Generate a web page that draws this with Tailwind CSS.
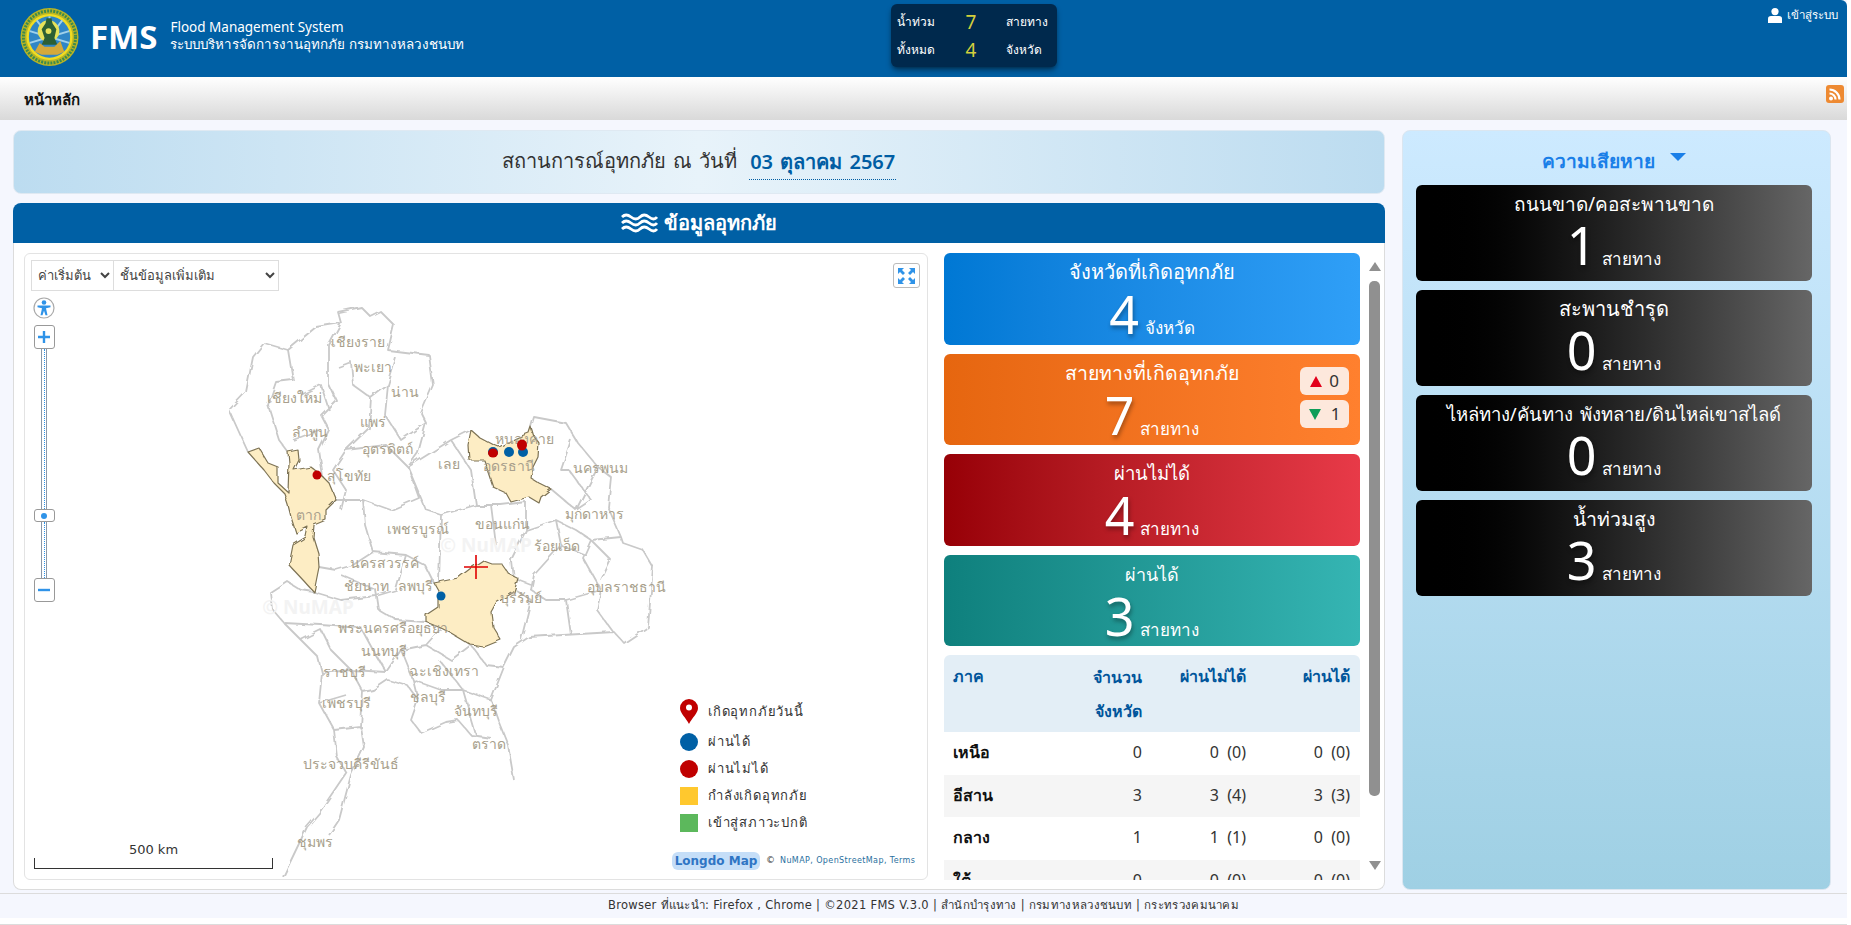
<!DOCTYPE html>
<html lang="th">
<head>
    <meta charset="UTF-8">
    <title>FMS Flood Management System</title>
    <script src="https://cdn.jsdelivr.net/npm/@tailwindcss/browser@4"></script>
</head>
<body class="bg-white font-['Noto_Sans','Open_Sans',sans-serif] overflow-hidden">
<div class="w-[1847px] h-[925px] flex flex-col bg-[#f5f7fe]">

    <!-- header -->
    <header class="h-[77px] bg-[#0060a5] flex items-start text-white relative shrink-0 rounded-tr-md">
        <svg class="ml-[20px] mt-[7px] w-[59px] h-[60px]" viewBox="0 0 60 60">
            <circle cx="30" cy="30" r="29.500" fill="#b8b424"/>
            <circle cx="30" cy="30" r="26.500" fill="none" stroke="#3c8a4e" stroke-width="3" stroke-dasharray="2 1.200"/>
            <circle cx="30" cy="30" r="23.500" fill="#f0dc22"/>
            <circle cx="30" cy="30" r="21" fill="#2f86c6"/>
            <path d="M30 30L30 9M30 30L17 13M30 30L43 13M30 30L10 24M30 30L50 24M30 30L10 36M30 30L50 36" stroke="#9fd0ea" stroke-width="2"/>
            <circle cx="29" cy="24" r="11" fill="#e6e25a"/>
            <path d="M27 11h5l1 5 4 6-2 9 3 7H22l3-7-3-9 4-6z" fill="#2c5f34"/>
            <circle cx="29" cy="24" r="3" fill="#e6e25a"/>
            <path d="M15 45l5-9 5 4h10l6-6 4 11-7 3H22z" fill="#d4a93a"/>
        </svg>
        <span class="ml-[11px] mt-[14px] text-[33px] leading-[46px] font-bold">FMS</span>
        <div class="ml-[13px] mt-[19px] leading-[17px]">
            <div class="text-[13.500px]">Flood Management System</div>
            <div class="text-[13.400px]">ระบบบริหารจัดการงานอุทกภัย กรมทางหลวงชนบท</div>
        </div>
        <div class="absolute left-[891px] top-[4px] w-[166px] h-[63px] rounded-md bg-[#00294d] shadow-md shadow-black/40 grid grid-cols-[56px_36px_74px] content-center gap-y-[8px] pl-[6px] text-[12px] leading-[20px]">
            <span>น้ำท่วม</span><span class="text-[19px] text-[#d3cf3c] text-center">7</span><span class="pl-[17px]">สายทาง</span>
            <span>ทั้งหมด</span><span class="text-[19px] text-[#d3cf3c] text-center">4</span><span class="pl-[17px]">จังหวัด</span>
        </div>
        <div class="absolute right-[9px] top-[6px] flex items-center gap-[5px] text-[11.500px] leading-[18px]">
            <svg class="w-[14px] h-[15px]" viewBox="0 0 14 15" fill="#fff"><circle cx="7" cy="3.600" r="3.600"/><path d="M0 15V10.500Q0 8 3 8H11Q14 8 14 10.500V15z"/></svg>
            <span>เข้าสู่ระบบ</span>
        </div>
    </header>

    <!-- breadcrumb -->
    <nav class="h-[43px] shrink-0 bg-gradient-to-b from-white to-[#d9d9d9] flex items-center justify-between pl-[24px] pr-[3px]">
        <span class="text-[15px] font-semibold text-[#111] mt-[1px]">หน้าหลัก</span>
        <svg class="w-[18px] h-[18px] -mt-[10px]" viewBox="0 0 18 18">
            <rect width="18" height="18" rx="3" fill="#ee8a32"/>
            <circle cx="5" cy="13.500" r="2" fill="#fff"/>
            <path d="M3.500 8.500a6 6 0 0 1 6 6M3.500 4.500a10 10 0 0 1 10 10" fill="none" stroke="#fff" stroke-width="2.200"/>
        </svg>
    </nav>

    <main class="flex-1 flex gap-[17px] pl-[13px] pr-[16px] pt-[10px] min-h-0">
        <!-- left column -->
        <section class="w-[1372px] flex flex-col gap-[9px] h-[760px]">
            <div class="h-[64px] shrink-0 rounded-lg border border-[#dfe9f2] bg-gradient-to-r from-[#bcdcf0] via-[#e8f3fa] to-[#bcdcf0] flex items-center justify-center gap-[12px] text-[20px] [word-spacing:2px] text-[#333]">
                <span class="-mt-[2px]">สถานการณ์อุทกภัย ณ วันที่</span>
                <span class="font-semibold text-[#005da3] border-b border-dotted border-[#005da3] pb-[2px] px-[1px] mt-[3px]">03 ตุลาคม 2567</span>
            </div>

            <div class="flex-1 flex flex-col min-h-0">
                <div class="h-[40px] shrink-0 bg-[#0060a5] rounded-t-lg flex items-center justify-center gap-[6px] text-white text-[20px] font-bold">
                    <svg class="w-[37px] h-[22px]" viewBox="0 0 37 22" fill="none" stroke="#fff" stroke-width="2.800">
                        <path d="M1 5q4-4 9 0t9 0 9 0 8 0"/>
                        <path d="M1 11q4-4 9 0t9 0 9 0 8 0"/>
                        <path d="M1 17q4-4 9 0t9 0 9 0 8 0"/>
                    </svg>
                    <span>ข้อมูลอุทกภัย</span>
                </div>
                <div class="flex-1 min-h-0 bg-white border border-t-0 border-[#dcdcdc] rounded-b-lg flex pl-[10px] pt-[10px] pb-[9px]">
                    <!-- map -->
                    <div class="relative w-[905px] h-[627px] border border-[#e3e3e3] rounded-md overflow-hidden bg-white">
                        <svg class="absolute inset-0 w-[905px] h-[627px]" viewBox="24 254 905 627">
                            <defs>
                                <filter id="rough" x="0" y="0" width="100%" height="100%">
                                    <feTurbulence type="fractalNoise" baseFrequency="0.09" numOctaves="2" seed="4"/>
                                    <feDisplacementMap in="SourceGraphic" scale="5"/>
                                </filter>
                            </defs>
                            <g filter="url(#rough)">
                                <g fill="none" stroke="#c9c9c9" stroke-width="1.800" stroke-linejoin="round">
                                    <!-- country outline -->
                                    <path d="M247 452L228 410 245 392 252 357 263 343 287 350 315 327 340 323 337 312 360 307 370 317 380 312 393 325 387 350 428 355 432 385 420 413 425 423 417 453 407 467 450 440 470 430M530 427L533 417 565 423 577 443 597 467 610 477 607 507 620 537 622 543 642 550 652 567 647 627 623 643 613 632 528 637 513 647 503 667 490 700 497 720 507 745 513 780M313 592L300 590 287 582 270 593 272 610 283 623 300 640 317 657 321 673 318 703 333 730 336 757 345 773 318 813 306 827 282 877"/>
                                    <!-- gulf and east coast -->
                                    <path d="M360 727L363 747 350 775 338 820 328 835M333 730L360 727 362 692 372 690 387 680 407 686 417 700 410 720 420 733 445 722 457 720 470 735 490 738"/>
                                    <!-- north -->
                                    <path d="M340 323L328 345 328 385 335 400 320 415 328 430 318 450 322 477M287 350L292 380 275 382 267 405 278 440 287 452M337 367L350 362 352 385 370 398 387 385 395 358M370 398L368 428 345 450 332 470 345 490 340 510M387 385L384 415 400 440 425 423M345 450L385 445 407 467 418 498 390 510 362 500 335 500M362 500L364 525 372 552M407 467L425 510 440 515 438 583M370 398L387 385M300 395L320 385 328 410M292 440L318 430"/>
                                    <!-- northeast -->
                                    <path d="M450 440L470 470 475 505 440 515M475 505L500 505 525 502M550 489L575 510 597 467M525 502L525 530 510 560 512 578 530 585M525 530L555 520 575 530 590 540 582 558 600 590 596 610 612 632M555 520L560 545 533 575 530 590 545 600 565 600 570 635M620 537L590 540M565 600L600 590M515 590L530 600 520 640M590 540L610 560 600 580M568 470L590 500 575 510M570 440L560 470 568 470M490 505L495 545M560 545L585 555"/>
                                    <!-- central -->
                                    <path d="M318 567L335 570 352 565 372 552 405 555 424 565 433 583M340 575L375 590 378 610 395 620 425 622M313 592L340 600 375 596M283 623L320 625 360 628M300 640L320 630 330 650 350 670 362 692M350 670L385 672 400 650 425 645 440 628M400 650L412 680 417 700M425 645L450 660 470 645M440 662L462 690 490 700M412 680L440 690 462 690 475 735M375 596L395 590 405 555M360 628L372 650 385 672M321 673L350 670M318 703L345 695M470 645L485 665 503 667"/>
                                </g>
                                <g fill="#fdedc4" stroke="#7d7355" stroke-width="1.200" stroke-linejoin="round">
                                    <path d="M247 452L258 448 267 463 277 467 277 483 287 492 288 463 287 452 297 450 298 460 293 470 310 467 322 477 328 483 335 500 325 510 325 520 313 525 312 537 317 553 318 567 313 592 302 580 288 565 292 545 305 537 307 527 295 533 290 517 287 505 283 493 273 483 263 470z"/>
                                    <path d="M470 430L478 437 493 445 498 447 515 438 528 433 530 427 533 437 538 443 537 457 532 467 530 478 538 483 550 489 540 497 538 503 528 497 510 502 505 493 492 487 487 472 483 460 468 460 467 445z"/>
                                    <path d="M482 560L490 563 500 563 507 573 517 578 513 592 495 603 490 612 492 627 500 640 483 647 470 645 450 633 440 628 425 622 425 615 437 607 437 590 433 583 457 578 470 568z"/>
                                </g>
                            </g>
                            <g class="fill-[#f3f3f3] text-[19px] font-bold" text-anchor="middle">
                                <text x="485" y="552">© NuMAP</text>
                                <text x="307" y="614">© NuMAP</text>
                            </g>
                            <g class="fill-[#a89f8c] text-[14px]" text-anchor="middle" dominant-baseline="middle">
                                <text x="357" y="343">เชียงราย</text><text x="372" y="368">พะเยา</text><text x="404" y="393">น่าน</text>
                                <text x="293" y="399">เชียงใหม่</text><text x="309" y="433">ลำพูน</text><text x="372" y="423">แพร่</text>
                                <text x="386" y="450">อุตรดิตถ์</text><text x="348" y="477">สุโขทัย</text><text x="448" y="465">เลย</text>
                                <text x="307" y="516">ตาก</text><text x="417" y="530">เพชรบูรณ์</text><text x="383" y="564">นครสวรรค์</text>
                                <text x="365" y="587">ชัยนาท</text><text x="414" y="587">ลพบุรี</text><text x="501" y="525">ขอนแก่น</text>
                                <text x="523" y="440">หนองคาย</text><text x="508" y="467">อุดรธานี</text><text x="599" y="469">นครพนม</text>
                                <text x="593" y="515">มุกดาหาร</text><text x="556" y="547">ร้อยเอ็ด</text><text x="520" y="599">บุรีรัมย์</text>
                                <text x="625" y="588">อุบลราชธานี</text><text x="392" y="629">พระนครศรีอยุธยา</text><text x="383" y="652">นนทบุรี</text>
                                <text x="343" y="673">ราชบุรี</text><text x="443" y="672">ฉะเชิงเทรา</text><text x="427" y="698">ชลบุรี</text>
                                <text x="345" y="704">เพชรบุรี</text><text x="475" y="712">จันทบุรี</text><text x="488" y="745">ตราด</text>
                                <text x="350" y="765">ประจวบคีรีขันธ์</text><text x="314" y="843">ชุมพร</text>
                            </g>
                            <ellipse cx="316" cy="475" rx="4.500" ry="4.500" fill="#c00000"/>
                            <circle cx="492" cy="452" r="5" fill="#0060a5"/><ellipse cx="492" cy="453" rx="5" ry="4.500" fill="#c00000"/>
                            <circle cx="508" cy="452" r="5" fill="#0060a5"/><circle cx="522" cy="452" r="5" fill="#0060a5"/>
                            <ellipse cx="521" cy="445" rx="5" ry="5.500" fill="#c00000"/><circle cx="440" cy="596" r="4.500" fill="#0060a5"/>
                            <path d="M463 567h24M475 555v24" stroke="#e00000" stroke-width="1.600"/>
                        </svg>

                        <!-- map controls -->
                        <div class="absolute left-[6px] top-[6px] flex font-['DejaVu_Sans',sans-serif] text-[13px] text-[#444]">
                            <select class="h-[31px] w-[83px] border border-[#ddd] bg-white pl-[2px]"><option>ค่าเริ่มต้น</option></select>
                            <select class="h-[31px] w-[165px] border border-l-0 border-[#ddd] bg-white pl-[2px]"><option>ชั้นข้อมูลเพิ่มเติม</option></select>
                        </div>
                        <div class="absolute right-[7px] top-[9px] w-[27px] h-[25px] border border-[#bbb] rounded-[3px] bg-white flex items-center justify-center">
                            <svg class="w-[19px] h-[18px]" viewBox="0 0 19 18" fill="#2f93e8">
                                <path d="M1 1h6L5 3l3 3-2 2-3-3-2 2zM18 1h-6l2 2-3 3 2 2 3-3 2 2zM1 17h6l-2-2 3-3-2-2-3 3-2-2zM18 17h-6l2-2-3-3 2-2 3 3 2-2z"/>
                            </svg>
                        </div>
                        <div class="absolute left-[8px] top-[43px] w-[22px] flex flex-col items-center">
                            <svg class="w-[22px] h-[22px]" viewBox="0 0 22 22">
                                <circle cx="11" cy="11" r="10" fill="#fff" stroke="#aaa" stroke-width="1.200"/>
                                <circle cx="11" cy="5.500" r="2.300" fill="#2f93e8"/>
                                <path d="M4.500 8.500h13v1.800l-4.500 1 1.500 7h-2l-1.500-4.500-1.500 4.500h-2l1.500-7-4.500-1z" fill="#2f93e8"/>
                            </svg>
                            <div class="mt-[6px] w-[21px] h-[24px] border border-[#999] rounded-[3px] bg-white flex items-center justify-center">
                                <svg class="w-[12px] h-[12px]" viewBox="0 0 12 12"><path d="M0 6h12M6 0v12" stroke="#2f93e8" stroke-width="2.400"/></svg>
                            </div>
                            <div class="w-[6px] h-[160px] border-x border-[#8a98a8] flex justify-center"><span class="h-full border-l border-dotted border-[#2f93e8]"></span></div>
                            <div class="w-[21px] h-[13px] border border-[#999] rounded-[3px] bg-white flex items-center justify-center">
                                <span class="w-[6px] h-[6px] rounded-full bg-[#2f93e8]"></span>
                            </div>
                            <div class="w-[6px] h-[56px] border-x border-[#8a98a8] flex justify-center"><span class="h-full border-l border-dotted border-[#2f93e8]"></span></div>
                            <div class="w-[21px] h-[24px] border border-[#999] rounded-[3px] bg-white flex items-center justify-center">
                                <svg class="w-[12px] h-[12px]" viewBox="0 0 12 12"><path d="M0 6h12" stroke="#2f93e8" stroke-width="2.400"/></svg>
                            </div>
                        </div>

                        <!-- scale -->
                        <div class="absolute left-[9px] top-[588px] w-[239px] font-['DejaVu_Sans',sans-serif] text-[13px] leading-[16px] text-[#333] text-center">
                            500 km
                            <div class="h-[11px] border-x border-b border-[#333]"></div>
                        </div>

                        <!-- legend -->
                        <div class="absolute left-[655px] top-[444px] flex flex-col font-['DejaVu_Sans',sans-serif] text-[13px] tracking-[0.8px] text-[#333]">
                            <div class="flex items-center gap-[10px] h-[27px] mb-[3px]">
                                <svg class="w-[18px] h-[25px]" viewBox="0 0 18 25">
                                    <path d="M9 0a9 9 0 0 1 9 9c0 5-6 10-9 16C6 19 0 14 0 9a9 9 0 0 1 9-9z" fill="#c00000"/>
                                    <circle cx="9" cy="8.500" r="3" fill="#fff"/>
                                </svg>
                                <span>เกิดอุทกภัยวันนี้</span>
                            </div>
                            <div class="flex items-center gap-[10px] h-[27px]"><span class="w-[18px] h-[18px] rounded-full bg-[#0060a5]"></span>ผ่านได้</div>
                            <div class="flex items-center gap-[10px] h-[27px]"><span class="w-[18px] h-[18px] rounded-full bg-[#c00000]"></span>ผ่านไม่ได้</div>
                            <div class="flex items-center gap-[10px] h-[27px]"><span class="w-[18px] h-[18px] bg-[#ffc82e]"></span>กำลังเกิดอุทกภัย</div>
                            <div class="flex items-center gap-[10px] h-[27px]"><span class="w-[18px] h-[18px] bg-[#5cb85c]"></span>เข้าสู่สภาวะปกติ</div>
                        </div>

                        <!-- attribution -->
                        <div class="absolute left-[647px] top-[598px] flex items-center whitespace-nowrap font-['DejaVu_Sans',sans-serif]">
                            <span class="w-[88px] text-center font-bold text-[12px] leading-[18px] rounded-[6px] bg-[#c5def8] text-[#2f75c4]">Longdo Map</span>
                            <span class="ml-[6px] text-[9px] text-[#333]">©</span>
                            <span class="ml-[5px] text-[8px] tracking-[0.4px] text-[#2a6f9e]">NuMAP, OpenStreetMap, Terms</span>
                        </div>
                    </div>

                    <!-- stats -->
                    <div class="w-[416px] ml-[16px] h-[627px] overflow-hidden flex flex-col gap-[9px] shrink-0">
                        <div class="h-[92px] shrink-0 rounded-md bg-gradient-to-r from-[#0078d4] to-[#2f9ff7] text-white text-center pt-[6px]">
                            <div class="text-[20px] leading-[26px]">จังหวัดที่เกิดอุทกภัย</div>
                            <div class="flex items-baseline justify-center gap-[6px] leading-[57px]"><span class="text-[52px] [text-shadow:1px_3px_4px_rgba(0,0,0,0.35)]">4</span><span class="text-[17px]">จังหวัด</span></div>
                        </div>
                        <div class="relative h-[91px] shrink-0 rounded-md bg-gradient-to-r from-[#e6660f] to-[#ff802e] text-white text-center pt-[6px]">
                            <div class="text-[19.500px] leading-[26px]">สายทางที่เกิดอุทกภัย</div>
                            <div class="flex items-baseline justify-center gap-[6px] leading-[57px]"><span class="text-[52px] [text-shadow:1px_3px_4px_rgba(0,0,0,0.35)]">7</span><span class="text-[17px]">สายทาง</span></div>
                            <div class="absolute right-[11px] top-[13px] flex flex-col gap-[5px] text-[#333] text-[17px]">
                                <div class="w-[49px] h-[28px] rounded-md bg-[#fde8dc] flex items-center justify-center gap-[7px]"><span class="w-0 h-0 border-x-[6px] border-x-transparent border-b-[11px] border-b-[#e3001b]"></span>0</div>
                                <div class="w-[49px] h-[28px] rounded-md bg-[#fde8dc] flex items-center justify-center gap-[10px]"><span class="w-0 h-0 border-x-[6px] border-x-transparent border-t-[11px] border-t-[#0f9d58]"></span>1</div>
                            </div>
                        </div>
                        <div class="h-[92px] shrink-0 rounded-md bg-gradient-to-r from-[#970006] to-[#e83a48] text-white text-center pt-[6px]">
                            <div class="text-[18.500px] leading-[26px]">ผ่านไม่ได้</div>
                            <div class="flex items-baseline justify-center gap-[6px] leading-[57px]"><span class="text-[52px] [text-shadow:1px_3px_4px_rgba(0,0,0,0.35)]">4</span><span class="text-[17px]">สายทาง</span></div>
                        </div>
                        <div class="h-[91px] shrink-0 rounded-md bg-gradient-to-r from-[#0e807d] to-[#35b5b3] text-white text-center pt-[6px]">
                            <div class="text-[18px] leading-[26px]">ผ่านได้</div>
                            <div class="flex items-baseline justify-center gap-[6px] leading-[57px]"><span class="text-[52px] [text-shadow:1px_3px_4px_rgba(0,0,0,0.35)]">3</span><span class="text-[17px]">สายทาง</span></div>
                        </div>
                        <table class="w-[416px] table-fixed text-right text-[16px] text-[#333] rounded-t-md overflow-hidden">
                            <thead class="bg-[#e3eef6] text-[#00559b]">
                                <tr class="h-[77px]">
                                    <th class="text-left font-semibold pl-[9px] pt-[9px] align-top">ภาค</th>
                                    <th class="font-semibold pr-[10px] pt-[5px] leading-[34px] align-top">จำนวน<br>จังหวัด</th>
                                    <th class="font-semibold pr-[10px] pt-[9px] align-top">ผ่านไม่ได้</th>
                                    <th class="font-semibold pr-[10px] pt-[9px] align-top">ผ่านได้</th>
                                </tr>
                            </thead>
                            <tbody>
                                <tr class="h-[43px]"><td class="text-left font-bold text-[#111] pl-[9px] pb-[3px]">เหนือ</td><td class="pr-[10px] pb-[3px]">0</td><td class="pr-[10px] pb-[3px]">0 &nbsp;(0)</td><td class="pr-[10px] pb-[3px]">0 &nbsp;(0)</td></tr>
                                <tr class="h-[42px] bg-[#f5f5f5]"><td class="text-left font-bold text-[#111] pl-[9px] pb-[3px]">อีสาน</td><td class="pr-[10px] pb-[3px]">3</td><td class="pr-[10px] pb-[3px]">3 &nbsp;(4)</td><td class="pr-[10px] pb-[3px]">3 &nbsp;(3)</td></tr>
                                <tr class="h-[43px]"><td class="text-left font-bold text-[#111] pl-[9px] pb-[3px]">กลาง</td><td class="pr-[10px] pb-[3px]">1</td><td class="pr-[10px] pb-[3px]">1 &nbsp;(1)</td><td class="pr-[10px] pb-[3px]">0 &nbsp;(0)</td></tr>
                                <tr class="h-[42px] bg-[#f5f5f5]"><td class="text-left font-bold text-[#111] pl-[9px] pb-[3px]">ใต้</td><td class="pr-[10px] pb-[3px]">0</td><td class="pr-[10px] pb-[3px]">0 &nbsp;(0)</td><td class="pr-[10px] pb-[3px]">0 &nbsp;(0)</td></tr>
                            </tbody>
                        </table>
                    </div>

                    <!-- scrollbar -->
                    <div class="relative w-[24px] h-[627px] shrink-0">
                        <span class="absolute left-[9px] top-[9px] w-0 h-0 border-x-[6px] border-x-transparent border-b-[9px] border-b-[#909090]"></span>
                        <span class="absolute left-[9px] top-[28px] w-[11px] h-[515px] rounded-[5px] bg-[#909090]"></span>
                        <span class="absolute left-[9px] top-[608px] w-0 h-0 border-x-[6px] border-x-transparent border-t-[9px] border-t-[#909090]"></span>
                    </div>
                </div>
            </div>
        </section>

        <!-- damage column -->
        <aside class="w-[429px] h-[760px] rounded-lg border border-[#dbe6f0] bg-gradient-to-b from-[#cdeaff] to-[#9fd0e4] pl-[13px] pr-[18px] pt-[7px]">
            <div class="h-[47px] flex items-center justify-center gap-[15px] text-[19.200px] font-semibold text-[#1a7fe8]">
                <span>ความเสียหาย</span>
                <span class="w-0 h-0 -mt-[10px] border-x-[8px] border-x-transparent border-t-[8px] border-t-[#1a7fe8]"></span>
            </div>
            <div class="flex flex-col gap-[9px]">
                <div class="h-[96px] rounded-md bg-gradient-to-r from-black to-[#666] text-white text-center pt-[6px]">
                    <div class="text-[19px] leading-[26px]">ถนนขาด/คอสะพานขาด</div>
                    <div class="flex items-baseline justify-center gap-[6px] leading-[56px]"><span class="text-[52px] [text-shadow:1px_3px_4px_rgba(0,0,0,0.35)]">1</span><span class="text-[17px]">สายทาง</span></div>
                </div>
                <div class="h-[96px] rounded-md bg-gradient-to-r from-black to-[#666] text-white text-center pt-[6px]">
                    <div class="text-[20px] leading-[26px]">สะพานชำรุด</div>
                    <div class="flex items-baseline justify-center gap-[6px] leading-[56px]"><span class="text-[52px] [text-shadow:1px_3px_4px_rgba(0,0,0,0.35)]">0</span><span class="text-[17px]">สายทาง</span></div>
                </div>
                <div class="h-[96px] rounded-md bg-gradient-to-r from-black to-[#666] text-white text-center pt-[6px]">
                    <div class="text-[18.500px] leading-[26px] [word-spacing:3px]">ไหล่ทาง/คันทาง พังทลาย/ดินไหล่เขาสไลด์</div>
                    <div class="flex items-baseline justify-center gap-[6px] leading-[56px]"><span class="text-[52px] [text-shadow:1px_3px_4px_rgba(0,0,0,0.35)]">0</span><span class="text-[17px]">สายทาง</span></div>
                </div>
                <div class="h-[96px] rounded-md bg-gradient-to-r from-black to-[#666] text-white text-center pt-[6px]">
                    <div class="text-[19.500px] leading-[26px]">น้ำท่วมสูง</div>
                    <div class="flex items-baseline justify-center gap-[6px] leading-[56px]"><span class="text-[52px] [text-shadow:1px_3px_4px_rgba(0,0,0,0.35)]">3</span><span class="text-[17px]">สายทาง</span></div>
                </div>
            </div>
        </aside>
    </main>

    <footer class="h-[25px] shrink-0 border-t border-[#dcdcdc] flex items-center justify-center font-['DejaVu_Sans',sans-serif] text-[11.500px] tracking-[0.3px] text-[#333]">
        Browser ที่แนะนำ: Firefox , Chrome | ©2021 FMS V.3.0 | สำนักบำรุงทาง | กรมทางหลวงชนบท | กระทรวงคมนาคม
    </footer>
    <div class="h-[7px] shrink-0 bg-white border-b border-[#dcdcdc]"></div>
</div>
</body>
</html>
